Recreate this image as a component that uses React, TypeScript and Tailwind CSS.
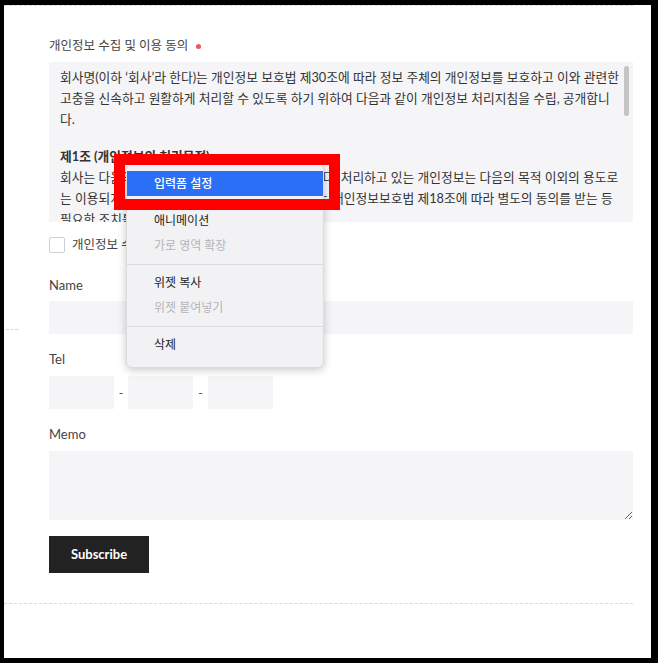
const MENU: ({ label: string; disabled?: boolean; active?: boolean } | "sep")[] = [
  { label: "입력폼 설정", active: true },
  "sep",
  { label: "애니메이션" },
  { label: "가로 영역 확장", disabled: true },
  "sep",
  { label: "위젯 복사" },
  { label: "위젯 붙여넣기", disabled: true },
  "sep",
  { label: "삭제" },
];

function ContextMenu() {
  return (
    <div className="absolute left-[126px] top-[163px] w-[198px] rounded-md border border-[#dcdcdf] bg-[#f2f2f4] pt-[7px] pb-[10px] shadow-[0_2px_8px_rgba(0,0,0,0.22)]">
      {MENU.map((m, i) =>
        m === "sep" ? (
          <div key={i} className="mt-[6px] mb-[5px] h-px bg-[#dcdcdf]" />
        ) : (
          <div
            key={i}
            className={`flex h-[25px] items-center pl-[27px] text-[12px] ${
              m.active ? "bg-[#2b6ff6] font-medium text-white" : m.disabled ? "text-[#b4b4b8]" : "text-[#222]"
            }`}
          >
            {m.label}
          </div>
        ),
      )}
    </div>
  );
}

export default function App() {
  return (
    <div className="relative h-[663px] w-[658px] bg-black pt-[5px] pl-[4px] pr-[7px] pb-[5px] font-['Lato','Noto_Sans_CJK_KR',sans-serif] text-[#333]">
      <div className="h-full bg-white">
        <div className="relative w-[629px] border-y border-dashed border-[#dadada] pt-[30px] pb-[30px] pl-[45px]">
          <span className="absolute left-[2px] top-[323px] w-[12px] border-t border-dashed border-[#d4d4d4]" />

          <div className="flex h-5 items-center text-[12.5px] text-[#444]">
            개인정보 수집 및 이용 동의
            <span className="ml-[8px] h-[5px] w-[5px] rounded-full bg-[#f0565a]" />
          </div>

          <div className="relative mt-[6px] h-[160px] overflow-hidden bg-[#f5f5f7] pl-[11px] pr-[13px] pt-[5px] text-[12.75px] leading-[21px] text-[#333]">
            <p>
              회사명(이하 ‘회사’라 한다)는 개인정보 보호법 제30조에 따라 정보 주체의 개인정보를 보호하고 이와 관련한 고충을 신속하고 원활하게 처리할 수 있도록 하기 위하여 다음과 같이 개인정보 처리지침을 수립, 공개합니다.
            </p>
            <p className="mt-[16px] font-bold">제1조 (개인정보의 처리목적)</p>
            <p>
              회사는 다음의 목적을 위하여 개인정보를 처리합니다. 처리하고 있는 개인정보는 다음의 목적 이외의 용도로는 이용되지 않으며, 이용 목적이 변경되는 경우에는 개인정보보호법 제18조에 따라 별도의 동의를 받는 등 필요한 조치를 이행할 예정입니다.
            </p>
            <span className="absolute right-[4px] top-[4px] h-[50px] w-[5px] rounded-full bg-[#c4c4c6]" />
          </div>

          <label className="mt-[15px] flex h-4 items-center gap-[7px] text-[12.5px] text-[#444]">
            <span className="h-4 w-4 rounded-[2px] border border-[#cfcfd3] bg-white" />
            개인정보 수집 및 이용에 동의합니다.
          </label>

          <div className="mt-[23px] flex h-5 items-center text-[13px] text-[#444]">Name</div>
          <div className="mt-[5px] h-[33px] w-[584px] bg-[#f5f5f7]" />

          <div className="mt-[16px] flex h-5 items-center text-[13px] text-[#444]">Tel</div>
          <div className="mt-[6px] flex h-[33px] items-center text-[12px] text-[#444]">
            <div className="h-full w-[65px] bg-[#f5f5f7]" />
            <span className="w-[14px] text-center">-</span>
            <div className="h-full w-[65px] bg-[#f5f5f7]" />
            <span className="w-[15px] text-center">-</span>
            <div className="h-full w-[65px] bg-[#f5f5f7]" />
          </div>

          <div className="mt-[16px] flex h-5 items-center text-[13px] text-[#444]">Memo</div>
          <textarea className="mt-[6px] block h-[69px] w-[584px] resize bg-[#f5f5f7] outline-none" />

          <button className="mt-[16px] flex h-[37px] w-[100px] items-center justify-center bg-[#222] text-[13px] font-bold text-white">
            Subscribe
          </button>
        </div>
      </div>

      <ContextMenu />
      <div className="absolute left-[114px] top-[154px] h-[56px] w-[226px] border-[11px] border-[#ff0000]" />
    </div>
  );
}
